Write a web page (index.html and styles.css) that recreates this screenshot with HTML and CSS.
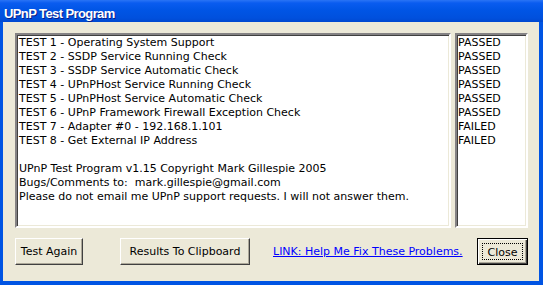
FILE: index.html
```html
<!DOCTYPE html>
<html>
<head>
<meta charset="utf-8">
<link rel="stylesheet" href="styles.css">
</head>
<body>
<div class="window">
  <div class="titlebar"><span class="title">UPnP Test Program</span></div>
  <div class="client">
    <div class="panes">
      <div class="pane main">
        <div>TEST 1 - Operating System Support</div>
        <div>TEST 2 - SSDP Service Running Check</div>
        <div>TEST 3 - SSDP Service Automatic Check</div>
        <div>TEST 4 - UPnPHost Service Running Check</div>
        <div>TEST 5 - UPnPHost Service Automatic Check</div>
        <div>TEST 6 - UPnP Framework Firewall Exception Check</div>
        <div>TEST 7 - Adapter #0 - 192.168.1.101</div>
        <div>TEST 8 - Get External IP Address</div>
        <div>&nbsp;</div>
        <div>UPnP Test Program v1.15 Copyright Mark Gillespie 2005</div>
        <div>Bugs/Comments to:&nbsp; mark.gillespie@gmail.com</div>
        <div>Please do not email me UPnP support requests. I will not answer them.</div>
      </div>
      <div class="pane results">
        <div>PASSED</div>
        <div>PASSED</div>
        <div>PASSED</div>
        <div>PASSED</div>
        <div>PASSED</div>
        <div>PASSED</div>
        <div>FAILED</div>
        <div>FAILED</div>
      </div>
    </div>
    <div class="actions">
      <button class="btn btn-test">Test Again</button>
      <button class="btn btn-clip">Results To Clipboard</button>
      <a class="link" href="#">LINK: Help Me Fix These Problems.</a>
      <button class="btn btn-close"><span class="focus">Close</span></button>
    </div>
  </div>
</div>
</body>
</html>
```

FILE: styles.css
```css
html, body {
  margin: 0;
  padding: 0;
  background: #ece9d8;
}
.window {
  width: 543px;
  height: 285px;
  display: flex;
  flex-direction: column;
  background: #0054e3;
  overflow: hidden;
  font-family: "DejaVu Sans", "Liberation Sans", sans-serif;
  font-size: 11px;
  color: #000;
}
.titlebar {
  height: 22px;
  box-sizing: border-box;
  padding: 6px 0 0 4px;
  flex: none;
  display: flex;
  align-items: center;
  background: linear-gradient(to bottom, #2a74f5 0px, #0a5cf0 3px, #0055e5 10px, #0050dd 18px, #0048d0 22px);
}
.title {
  color: #fff;
  font-family: "Liberation Sans", Arial, sans-serif;
  font-weight: bold;
  font-size: 13px;
  line-height: 16px;
  letter-spacing: -0.6px;
  text-shadow: 1px 1px 0 #0a1e8a;
}
.client {
  flex: 1;
  margin: 0 4px 4px 3px;
  background: #ece9d8;
  padding: 11px 11px 0 12px;
  display: flex;
  flex-direction: column;
}
.panes {
  display: flex;
  gap: 4px;
  height: 195px;
}
.pane {
  background: #fff;
  box-sizing: border-box;
  border-style: solid;
  border-width: 2px;
  border-color: #848284 #ffffff #ffffff #848284;
  box-shadow: inset 1px 1px 0 #404040, inset -1px -1px 0 #ece9d8;
  line-height: 14px;
  padding: 1px 0 0 2px;
  white-space: nowrap;
  overflow: hidden;
}
.main {
  width: 436px;
}
.results {
  width: 73px;
  padding-left: 1px;
}
.actions {
  display: flex;
  align-items: center;
  margin-top: 10px;
  height: 27px;
}
.btn {
  font-family: inherit;
  font-size: 11px;
  color: #000;
  background: #ece9d8;
  height: 27px;
  padding: 0;
  box-sizing: border-box;
  border-style: solid;
  border-width: 1px;
  border-color: #ffffff #404040 #404040 #ffffff;
  box-shadow: inset -1px -1px 0 #aca899;
}
.btn-test {
  width: 68px;
}
.btn-clip {
  width: 130px;
  margin-left: 37px;
}
.link {
  margin-left: 23px;
  color: #0000ff;
  text-decoration: underline;
}
.btn-close {
  width: 51px;
  margin-left: auto;
  border: 1px solid #000;
  box-shadow: inset 1px 1px 0 #fff, inset -1px -1px 0 #404040, inset -2px -2px 0 #aca899;
  display: flex;
  align-items: center;
  justify-content: center;
}
.focus {
  display: block;
  width: 41px;
  height: 17px;
  line-height: 17px;
  box-sizing: border-box;
  border: 1px dotted #000;
}
```
